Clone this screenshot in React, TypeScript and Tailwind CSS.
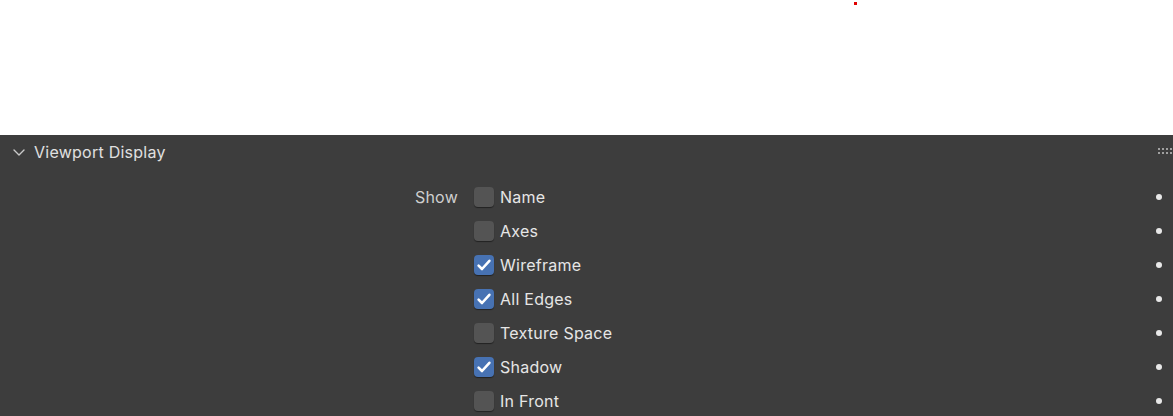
import React from "react";

const rows = [
  { label: "Name", checked: false },
  { label: "Axes", checked: false },
  { label: "Wireframe", checked: true },
  { label: "All Edges", checked: true },
  { label: "Texture Space", checked: false },
  { label: "Shadow", checked: true },
  { label: "In Front", checked: false },
];

const Check: React.FC<{ checked: boolean }> = ({ checked }) => (
  <div
    className={
      "w-[20px] h-[20px] rounded-[4px] flex items-center justify-center shadow-[0_1px_1px_rgba(0,0,0,0.45)] " +
      (checked ? "bg-[#4772b3]" : "bg-[#545454]")
    }
  >
    {checked && (
      <svg width="16" height="16" viewBox="0 0 16 16">
        <path d="M2.6 8.6 L6 12 L13.4 3.8" fill="none" stroke="#fff" strokeWidth="2.6" strokeLinecap="round" strokeLinejoin="round" />
      </svg>
    )}
  </div>
);

export default function App() {
  return (
    <div className="w-[1173px] h-[416px] overflow-hidden bg-white flex flex-col font-['Inter',sans-serif] tracking-[0.25px]">
      <div className="h-[135px] relative shrink-0">
        <div className="absolute left-[854px] top-[2px] w-[3px] h-[3px] bg-[#e00000]" />
      </div>
      <div className="flex-1 bg-[#3d3d3d] flex flex-col">
        <div className="h-[34px] flex items-center pl-[11px] pr-0 relative">
          <svg width="16" height="16" viewBox="0 0 16 16" className="mr-[7px]">
            <path d="M3 6 L8 11 L13 6" fill="none" stroke="#c9c9c9" strokeWidth="1.4" strokeLinecap="round" strokeLinejoin="round" />
          </svg>
          <span className="text-[16px] text-[#e0e0e0]">Viewport Display</span>
          <div className="ml-auto grid grid-cols-4 gap-x-[2px] gap-y-[2px] mr-[1px] mt-[-2px]">
            {Array.from({ length: 8 }).map((_, i) => (
              <div key={i} className="w-[2px] h-[2px] bg-[#a0a0a0]" />
            ))}
          </div>
        </div>
        <div className="flex flex-col pt-[11px]">
          {rows.map((r, i) => (
            <div key={r.label} className="h-[34px] flex items-center">
              <div className="w-[458px] text-right text-[16px] text-[#cfcfcf]">{i === 0 ? "Show" : ""}</div>
              <div className="ml-[16px]">
                <Check checked={r.checked} />
              </div>
              <span className="ml-[6px] text-[16px] text-[#e6e6e6]">{r.label}</span>
              <div className="ml-auto mr-[11px] w-[6px] h-[6px] rounded-full bg-[#e8e8e8]" />
            </div>
          ))}
        </div>
      </div>
    </div>
  );
}
